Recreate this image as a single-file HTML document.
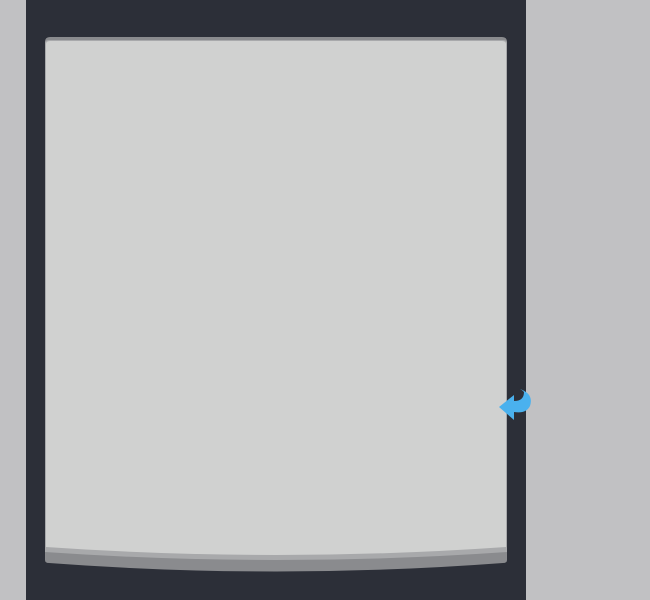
<!DOCTYPE html>
<html><head><style>
html,body{margin:0;padding:0;width:650px;height:600px;background:#c1c1c3;overflow:hidden}
.panel{position:absolute;left:26px;top:0;width:500px;height:600px;background:#2c2f38}
</style></head><body>
<div class="panel"></div>
<svg width="650" height="600" style="position:absolute;left:0;top:0">
<path d="M45,42 Q45,37 50,37 L502,37 Q507,37 507,42 L507,560 Q507,563 503,563 Q276,580 49,563 Q45,563 45,560 Z" fill="#8a8b8e"/>
<path d="M45,43 Q45,40 49,40 L503,40 Q507,40 507,43 L507,552 Q276,568 45,552 Z" fill="#a8a9ab"/>
<path d="M46,44 Q46,41 50,41 L502,41 Q506,41 506,44 L506,547 Q276,563 46,547 Z" fill="#d0d1d0"/>
<path d="M499,407 L514,395 L514,401 Q524,401 524,392 Q522,390 520,389 Q534,394 530,406 Q526,414 514,412 L514,420 Z" fill="#4ab1ee"/>
</svg>
</body></html>
